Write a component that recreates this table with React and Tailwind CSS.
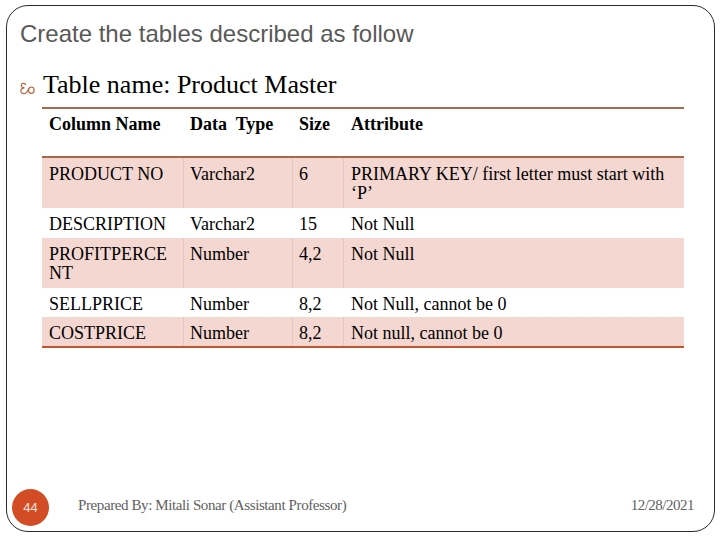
import React from "react";

const serif = { fontFamily: '"Liberation Serif", "Times New Roman", serif' };

function Bullet() {
  return (
    <svg width="15" height="13" viewBox="0 0 14 12" className="shrink-0">
      <path
        d="M5.2 2.2 C4.2 0.6 1.2 0.8 1.2 3 C1.2 4.6 2.8 5.4 4.2 5.4 C2.2 5.4 0.6 6.6 0.8 8.4 C1 10.6 3.6 11.4 5.4 10.2 C7 9.2 7.4 7.4 8.2 6.2"
        fill="none"
        stroke="#b4673e"
        strokeWidth="1.1"
        strokeLinecap="round"
      />
      <ellipse cx="10.6" cy="7.6" rx="2.6" ry="3" fill="none" stroke="#b4673e" strokeWidth="1.1" />
    </svg>
  );
}

const rows = [
  {
    c: [
      "PRODUCT NO",
      "Varchar2",
      "6",
      <>
        PRIMARY KEY/ first letter must start with
        <br />
        ‘P’
      </>,
    ],
    h: "h-[50px]",
    pink: true,
  },
  { c: ["DESCRIPTION", "Varchar2", "15", "Not Null"], h: "h-[30px]", pink: false },
  {
    c: [
      <>
        PROFITPERCE
        <br />
        NT
      </>,
      "Number",
      "4,2",
      "Not Null",
    ],
    h: "h-[50px]",
    pink: true,
  },
  { c: ["SELLPRICE", "Number", "8,2", "Not Null, cannot be 0"], h: "h-[29px]", pink: false },
  { c: ["COSTPRICE", "Number", "8,2", "Not null, cannot be 0"], h: "h-[29px]", pink: true },
];

export default function App() {
  return (
    <div className="w-[720px] h-[540px] bg-white pt-[5px] pl-[6px] overflow-hidden">
      <div className="w-[709px] h-[527px] border border-[#2a2a2a] rounded-[22px] flex flex-col">
        <div
          className="pt-[14px] pl-[13px] text-[24px] leading-[28px] text-[#595959]"
          style={{ fontFamily: '"Liberation Sans", Arial, sans-serif' }}
        >
          Create the tables described as follow
        </div>

        <div className="mt-[22px] pl-[13px] flex items-center h-[30px]">
          <div className="mt-[7px]">
            <Bullet />
          </div>
          <span className="ml-[8px] text-[26px] leading-[30px] text-black" style={serif}>
            Table name: Product Master
          </span>
        </div>

        <div className="mt-[7px] ml-[35px] w-[642px] text-[18px] leading-[19px] text-black" style={serif}>
          <div className="border-t-2 border-b-2 border-[#a8694a]">
            <div className="grid grid-cols-[141px_109px_51px_341px] h-[47px] font-bold">
              <div className="pt-[6px] pl-[7px]">Column Name</div>
              <div className="pt-[6px] pl-[7px]">Data&nbsp; Type</div>
              <div className="pt-[6px] pl-[7px]">Size</div>
              <div className="pt-[6px] pl-[8px]">Attribute</div>
            </div>
          </div>
          <div className="border-b-2 border-[#c4552f]">
            {rows.map((r, i) => (
              <div
                key={i}
                className={`grid grid-cols-[141px_109px_51px_341px] ${r.h} ${r.pink ? "bg-[#f4d7d0]" : "bg-white"}`}
              >
                {r.c.map((cell, j) => (
                  <div
                    key={j}
                    className={`pt-[7px] ${j === 0 ? "pl-[7px]" : "pl-[6px]"} ${
                      j > 0 ? (r.pink ? "border-l border-[#e9c6bd]" : "border-l border-white") : ""
                    } ${j === 3 ? "pl-[7px]" : ""}`}
                  >
                    {cell}
                  </div>
                ))}
              </div>
            ))}
          </div>
        </div>

        <div className="mt-auto mb-[5px] pl-[5px] pr-[20px] flex items-center h-[37px]">
          <div
            className="w-[37px] h-[37px] rounded-full bg-[#d24d26] flex items-center justify-center text-[13px] text-[#fbe3dc]"
            style={{ fontFamily: '"Liberation Sans", Arial, sans-serif' }}
          >
            44
          </div>
          <span
            className="ml-[29px] mb-[5px] text-[15px] leading-[17px] tracking-[-0.4px] text-[#5f5f5f]"
            style={serif}
          >
            Prepared By: Mitali Sonar (Assistant Professor)
          </span>
          <span
            className="ml-auto mb-[5px] text-[15px] leading-[17px] tracking-[-0.5px] text-[#5f5f5f]"
            style={serif}
          >
            12/28/2021
          </span>
        </div>
      </div>
    </div>
  );
}
